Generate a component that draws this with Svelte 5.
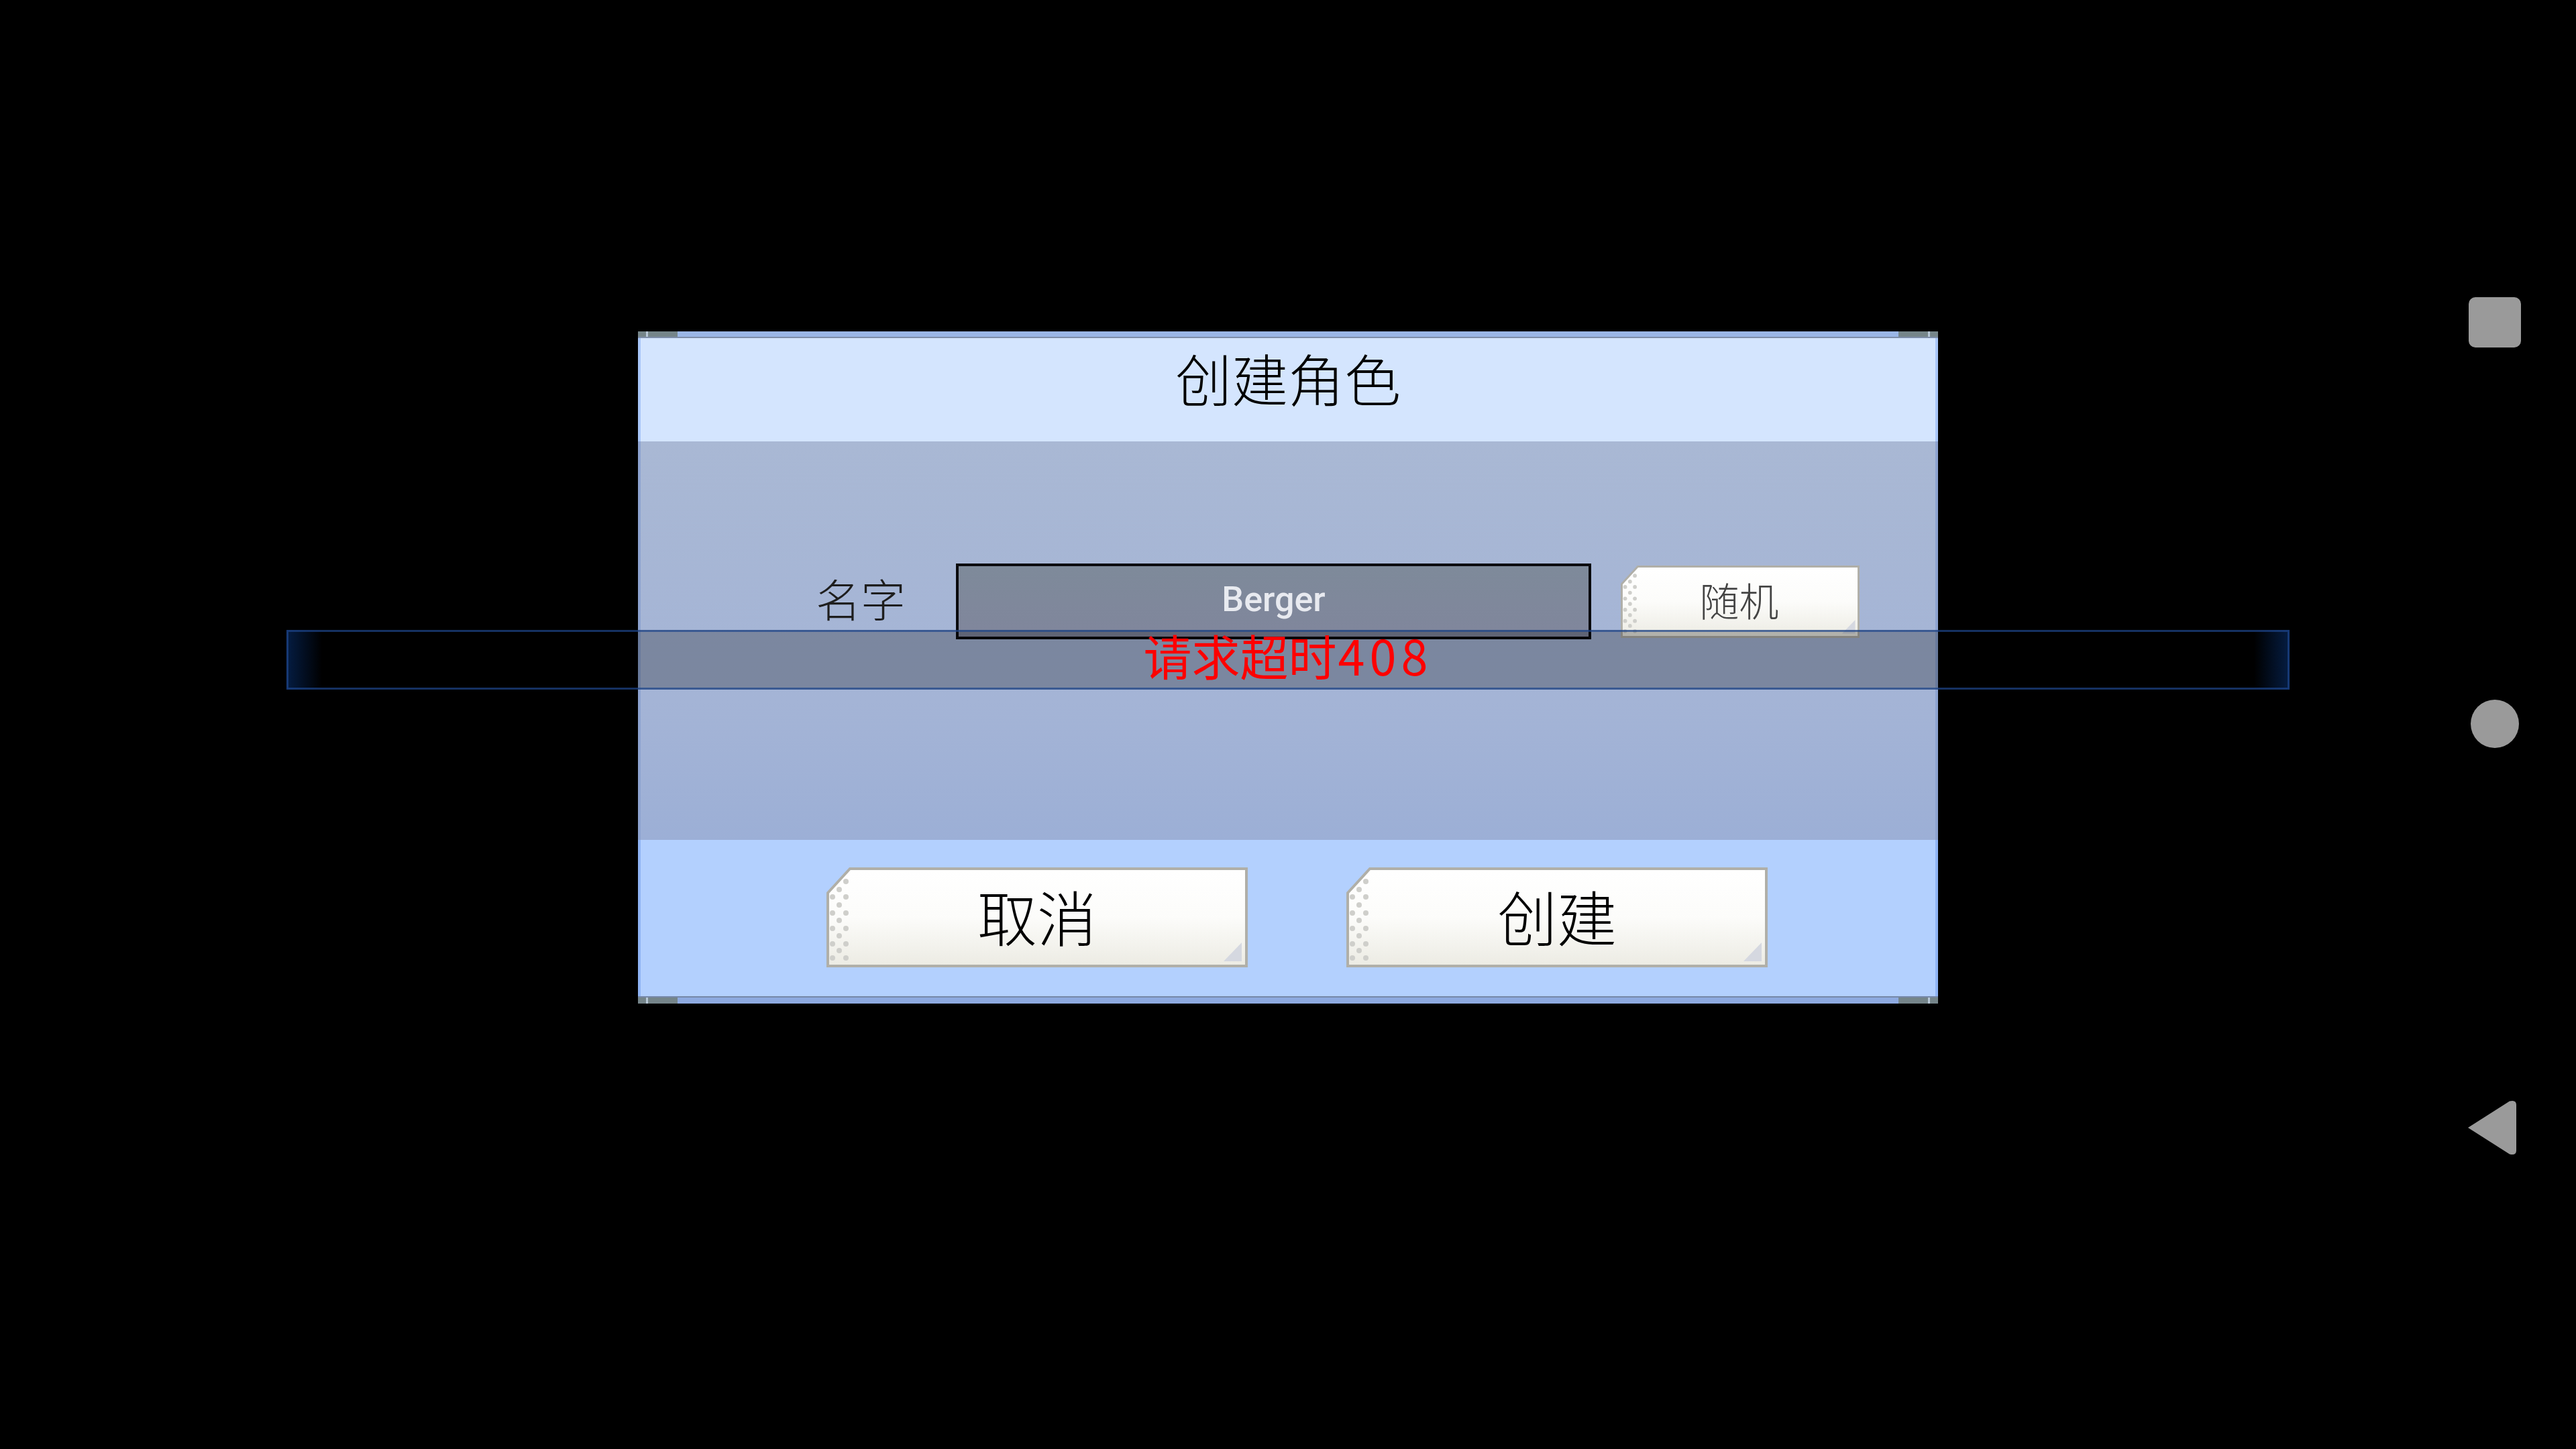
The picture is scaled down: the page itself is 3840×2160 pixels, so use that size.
<script>
	// dots of the torn paper edge on the buttons, in the 149-high button box
	const dots = [
		...[21, 44, 68, 91, 114, 135].map((y) => [29, y]),
		...[33, 56, 79, 102, 124].map((y) => [19, y]),
		...[44, 68, 91, 114, 135].map((y) => [9, y])
	];
</script>

{#snippet paperButton(id, label, boxWidth, size)}
	<button type="button" class="paper {size}">
		<svg class="paper-bg" viewBox="0 0 {boxWidth} 149" aria-hidden="true">
			<defs>
				<linearGradient id="paper-{id}" x1="0" y1="0" x2="0" y2="1">
					<stop offset="0" stop-color="#ffffff" />
					<stop offset="0.5" stop-color="#fcfcfa" />
					<stop offset="1" stop-color="#ecebe3" />
				</linearGradient>
			</defs>
			<polygon
				points="2,38 35,2 {boxWidth - 2},2 {boxWidth - 2},147 2,147"
				fill="url(#paper-{id})"
				stroke="#b0afa8"
				stroke-width="4"
			/>
			{#each dots as [x, y]}
				<circle cx={x} cy={y} r="4" fill="#cfcfcb" />
			{/each}
			<polygon
				points="{boxWidth - 9},112 {boxWidth - 9},140 {boxWidth - 36},140"
				fill="#d5d8e0"
			/>
		</svg>
		<span class="paper-label">{label}</span>
	</button>
{/snippet}

<div class="screen">
	<section class="dialog">
		<div class="edge top"><i class="cap"></i><i class="cap flip"></i></div>
		<header class="head">
			<h1>创建角色</h1>
		</header>
		<div class="body">
			<div class="name-row">
				<span class="name-label">名字</span>
				<div class="name-field">Berger</div>
				{@render paperButton('random', '随机', 491, 'small')}
			</div>
		</div>
		<footer class="foot">
			{@render paperButton('cancel', '取消', 628, 'large')}
			{@render paperButton('create', '创建', 628, 'large')}
		</footer>
		<div class="edge bottom"><i class="cap"></i><i class="cap flip"></i></div>
	</section>

	<div class="toast">
		<span class="toast-text">请求超时<span class="code">408</span></span>
	</div>

	<nav class="navbar">
		<div class="nav-square"></div>
		<div class="nav-circle"></div>
		<svg class="nav-back" viewBox="0 0 73 82" width="73" height="82" aria-hidden="true">
			<path d="M1 41 L63 1.5 Q73 -1 73 7 V75 Q73 83 63 80.5 Z" fill="#9a9a9a" />
		</svg>
	</nav>
</div>

<style>
	:global(body) {
		margin: 0;
		background: #000;
	}

	.screen {
		position: relative;
		box-sizing: border-box;
		display: flex;
		align-items: flex-start;
		width: 3840px;
		height: 2160px;
		padding: 443px 82px 0 951px;
		background: #000;
		overflow: hidden;
		font-family: 'Noto Sans CJK SC', 'Noto Sans', sans-serif;
		font-weight: 300;
	}

	.dialog {
		display: flex;
		flex-direction: column;
		width: 1938px;
		margin-top: 51px;
		filter: blur(0.7px);
	}

	.edge {
		box-sizing: border-box;
		display: flex;
		justify-content: space-between;
		height: 10px;
		background: #9ab6e6;
		border-bottom: 2px solid #7d8da8;
	}
	.edge.bottom {
		height: 11px;
		border-bottom: 0;
		border-top: 2px solid #7688a8;
		background: #8eaae0;
	}
	.cap {
		width: 59px;
		background: linear-gradient(to right, #75858a 0 12px, #b8c8d8 12px 15px, #75858a 15px);
	}
	.cap.flip {
		transform: scaleX(-1);
	}

	.head {
		box-sizing: border-box;
		height: 154px;
		padding-top: 7px;
		background: #d4e5fe;
		border-inline: 4px solid #a8c6f8;
		text-align: center;
	}
	h1 {
		margin: 0;
		font-size: 84px;
		font-weight: 300;
		line-height: 104px;
		color: #000;
	}

	.body {
		box-sizing: border-box;
		height: 594px;
		padding: 182px 0 0 261px;
		background: linear-gradient(#a9b8d4, #a4b4d6 65%, #9cafd6);
		border-inline: 4px solid #8da3d0;
	}
	.name-row {
		display: flex;
		align-items: center;
	}
	.name-label {
		width: 209px;
		margin-top: -12px;
		font-size: 67px;
		color: #1e1e1e;
	}
	.name-field {
		box-sizing: border-box;
		width: 947px;
		height: 113px;
		margin-right: 44px;
		border: 4px solid #0a0a0e;
		background: linear-gradient(#7e8a9a, #80869c);
		font-family: Roboto, sans-serif;
		font-size: 52px;
		font-weight: 500;
		line-height: 100px;
		text-align: center;
		color: #e8eaf0;
	}

	.foot {
		box-sizing: border-box;
		display: flex;
		gap: 147px;
		height: 233px;
		padding: 41px 0 0 277px;
		background: #b3d0fe;
		border-inline: 4px solid #8fb4f4;
	}

	.paper {
		position: relative;
		display: flex;
		align-items: center;
		justify-content: center;
		padding: 0;
		border: 0;
		background: none;
		font: inherit;
		color: #000;
	}
	.paper.large {
		width: 628px;
		height: 149px;
		font-size: 89px;
	}
	.paper.small {
		width: 356px;
		height: 108px;
		font-size: 59px;
		color: #444;
	}
	.paper-bg {
		position: absolute;
		inset: 0;
		width: 100%;
		height: 100%;
	}
	.paper-label {
		position: relative;
		margin-top: -6px;
		line-height: 1;
	}
	.paper.small .paper-label {
		margin-left: -3px;
	}

	/* the timeout notice sits on top of the dialog */
	.toast {
		position: absolute;
		left: 427px;
		top: 939px;
		box-sizing: border-box;
		display: flex;
		align-items: center;
		justify-content: center;
		width: 2986px;
		height: 89px;
		border: 3px solid rgba(30, 70, 140, 0.7);
		background:
			linear-gradient(to right, rgba(5, 30, 70, 0.9), transparent 50px),
			linear-gradient(to left, rgba(5, 30, 70, 0.9), transparent 50px),
			rgba(0, 0, 0, 0.25);
		font-size: 72px;
		font-weight: 400;
		line-height: 1;
		color: #ff0000;
	}
	.toast-text {
		margin-top: -16px;
	}
	.code {
		margin-left: 2px;
		letter-spacing: 7px;
	}

	.navbar {
		display: flex;
		flex-direction: column;
		align-items: center;
		gap: 525px;
		width: 78px;
		margin-left: auto;
	}
	.nav-square {
		width: 78px;
		height: 75px;
		border-radius: 10px;
		background: #9a9a9a;
	}
	.nav-circle {
		width: 72px;
		height: 72px;
		border-radius: 50%;
		background: #9a9a9a;
	}
	.nav-back {
		display: block;
		margin-right: 9px;
	}
</style>
